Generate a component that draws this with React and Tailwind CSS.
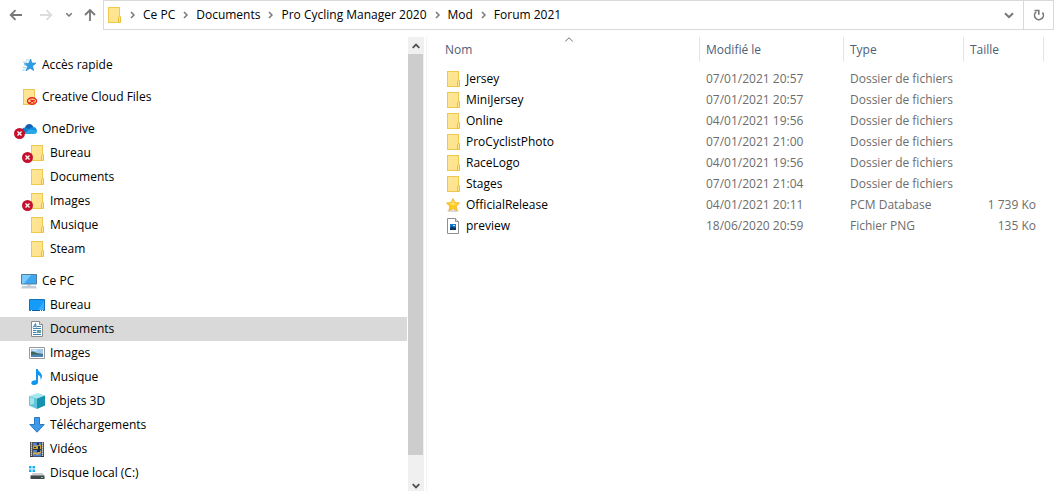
import { useState } from "react";

/* ---------- ICONS ---------- */

function Svg({ children, className = "" }) {
  return (
    <svg viewBox="0 0 16 16" className={`h-4 w-4 shrink-0 ${className}`} fill="none" aria-hidden="true">
      {children}
    </svg>
  );
}

const FolderIcon = () => (
  <Svg>
    <defs>
      <linearGradient id="folder" x1="0" y1="0" x2="1" y2="1">
        <stop offset="0" stopColor="#ffe796" />
        <stop offset="1" stopColor="#ffe28b" />
      </linearGradient>
    </defs>
    <rect x="2.5" y="0.5" width="11" height="15" fill="url(#folder)" stroke="#efc94c" />
    <path d="M12.5 15.5v-5l1-1h1v6z" fill="#ffe591" stroke="#e9c03d" />
  </Svg>
);

const QuickIcon = () => (
  <Svg>
    <path d="M9.7 2l1.100 4 4.200.2-3.500 2.700 1.200 4.600-3.600-2.300-4 2.600 1.500-4.400L3.200 6.800l4.500-.5z" fill="#2b9fe6" stroke="#1c7fc4" strokeWidth=".6" />
    <path d="M5 3h3.500M2 5.200h4M3 8h2.500M2 10.500H5M1 13h3.500" stroke="#8acdf3" strokeWidth=".9" />
  </Svg>
);

const CreativeIcon = () => (
  <Svg>
    <rect x="2.5" y="0.5" width="11" height="15" fill="#ffe591" stroke="#e9c75b" />
    <ellipse cx="11" cy="12" rx="4.500" ry="3.200" stroke="#ee1c1c" strokeWidth="1.400" />
    <path d="M7.500 13.600c1.600.8 2.500-.3 3.200-1.200.8-1 2-1.500 2.800-.4M9 11.200c1-.6 1.700.1 2.300.9.500.7 1.200 1.400 2.200 1" stroke="#ee1c1c" strokeWidth="1.200" />
  </Svg>
);

const CloudIcon = () => (
  <Svg>
    <path d="M4 6.800C4.600 4 7 2.700 9.200 3.200c1.600.3 2.700 1.400 3.200 2.800L8 9z" fill="#0f5fb4" />
    <path d="M0 10.500c0-2.200 1.800-4 4.100-4 1.700 0 3 .9 4.500 2L4 13H3C1.200 13 0 12 0 10.500z" fill="#1180d3" />
    <path d="M8.200 8.700C9.200 6.600 10.600 5.700 12.300 6c2 .2 3.400 1.500 3.700 3.500l-2 2z" fill="#1490df" />
    <path d="M3.300 13l5-4.300 7.500.9c.7 1.800-.6 3.400-2.500 3.400z" fill="#28a8ea" />
  </Svg>
);

const PcIcon = () => (
  <Svg>
    <path d="M.5 1.500h15v9.500H.5z" fill="#3ea7ee" stroke="#4f7f9f" />
    <path d="M1 2h9L3 10.500H1z" fill="#79cbff" />
    <path d="M6 12h4" stroke="#9aaab5" strokeWidth="1" />
    <path d="M1 14h14" stroke="#7d97a8" strokeWidth="1" />
    <path d="M0 15h16" stroke="#c9d3da" strokeWidth="1" />
  </Svg>
);

const DesktopIcon = () => (
  <Svg>
    <path d="M.5 2.500h15v11H.5z" fill="#159bf8" stroke="#1670b8" />
    <path d="M9 13l6-9v9z" fill="#39adff" />
    <path d="M1 13.500h14" stroke="#0b5ca3" />
    <path d="M2 13.500h1M11 13.500h1M13 13.500h1" stroke="#fff" />
  </Svg>
);

const DocumentIcon = () => (
  <Svg>
    <path d="M2.500.5h8l3 3v12h-11z" fill="#fff" stroke="#8c8c8c" />
    <path d="M10.500.5v3h3" fill="#e4e4e4" stroke="#8c8c8c" />
    <path d="M4 6.500l2.500-4 .8 4M5 5.200h2" stroke="#2a7fc0" />
    <path d="M8 5.500h4M4 7.500h8M4 9.500h3.500M4 11.500h3.500M4 13.500h8" stroke="#3f83b5" />
    <path d="M8 9h4v3H8z" fill="#5ca0a0" />
  </Svg>
);

const PictureIcon = () => (
  <Svg>
    <path d="M.5 2.500h15v11H.5z" fill="#fff" stroke="#989898" />
    <path d="M2 4h12v8H2z" fill="#9fc8ec" />
    <path d="M2 7c2-1 3 0 5 .7 2 .700 5 .600 7 1.300v1H2z" fill="#3a6753" />
    <path d="M2 9.800c3-.6 8-.5 12 0V12H2z" fill="#4b83b9" />
    <path d="M3 5.200h5" stroke="#e4f3fc" />
  </Svg>
);

const MusicIcon = () => (
  <Svg>
    <path d="M7 0h1.800c.2 2.500 4.200 3.800 4.200 7.200 0 1.500-.7 2.900-1.500 3.800.6-2.600-.3-4.400-2.500-5v7.200C9 15 7.300 16 5.300 16 3.600 16 2.300 15.200 2.300 13.900c0-1.700 2.200-2.900 4.700-2.600z" fill="#0f96ee" />
  </Svg>
);

const CubeIcon = () => (
  <Svg>
    <path d="M0 3l9-3 7 2.500-8 3z" fill="#a8e7ef" />
    <path d="M0 3l8 2.500V16l-8-3.500z" fill="#5fc6da" />
    <path d="M8 5.500l8-3v10L8 16z" fill="#1791b0" />
    <path d="M1 4.200l4 1.300v5L1 12z" fill="#a3e4ec" />
  </Svg>
);

const DownloadIcon = () => (
  <Svg>
    <path d="M5.500.5h5v7h4.700L8 15.200.8 7.500h4.700z" fill="#3e9aea" stroke="#2b79c4" />
  </Svg>
);

const VideoIcon = () => (
  <Svg>
    <path d="M1 1h14v15H1z" fill="#333" />
    <path d="M2.500 1.500v14M13.500 1.500v14" stroke="#fff" strokeWidth="1.500" strokeDasharray="1.200 .8" />
    <path d="M4 1.500h8V8H4zM4 9h8v6.500H4z" fill="#4f80cf" />
    <path d="M4 6l2-2 2 1 2-2 2 1v4H4z" fill="#c9a53c" />
    <path d="M4 12l2-1 2 1 4-2v2l-3 2-3-1-2 1z" fill="#d0a940" />
    <path d="M8 2h2v2H8zM9 5h2v3H9zM8 9h3v2H8zM5 6h2v1H5z" fill="#1c2c42" />
  </Svg>
);

const DiskIcon = () => (
  <Svg>
    <path d="M0 1h2.500v2.500H0zM3.500 1H6v2.500H3.500zM0 4.500h2.500V7H0zM3.500 4.500H6V7H3.500z" fill="#17b0f5" />
    <path d="M4 8h9.500l2 3h-14z" fill="#c9cbcd" />
    <path d="M1.500 10.500h14V14h-14z" fill="#43474a" />
    <path d="M12 12.500h2" stroke="#62e077" />
  </Svg>
);

const StarIcon = () => (
  <Svg>
    <ellipse cx="8" cy="13.800" rx="6" ry="1.200" fill="#d9d9d9" />
    <path d="M8 1.500l1.900 4 4.600.5-3.300 3.200.9 4.500L8 11.500l-4.100 2.200.9-4.500L1.500 6l4.600-.5z" fill="#ffc91f" stroke="#f2b01e" strokeWidth=".8" />
    <path d="M8 3l1.300 3.200 3 .3L8 8.500 3.700 6.500l3-.3z" fill="#ffe266" />
  </Svg>
);

const PngIcon = () => (
  <Svg>
    <path d="M2.500.5h8l3 3v12h-11z" fill="#fff" stroke="#8f8f8f" />
    <path d="M10.500.5v3h3" fill="#e9e9e9" stroke="#8f8f8f" />
    <path d="M5 6h6v6H5z" fill="#1477cc" />
    <path d="M5 12V10l2-2 2 2 1-1 1 1v2z" fill="#0a3563" />
    <path d="M8 7h2v1H8z" fill="#bfe2fa" />
  </Svg>
);

const ErrorBadge = () => (
  <svg viewBox="0 0 11 11" className="absolute top-[7px] -left-[7px] h-[11px] w-[11px]" aria-hidden="true">
    <circle cx="5.500" cy="5.500" r="5.500" fill="#c4122d" />
    <path d="M3.500 3.500l4 4M7.500 3.500l-4 4" stroke="#fff" strokeWidth="1.300" />
  </svg>
);

const CrumbArrow = () => (
  <svg viewBox="0 0 5 8" className="h-2 w-[5px] shrink-0" fill="none" aria-hidden="true">
    <path d="M1 1l3 3-3 3" stroke="#777" strokeWidth="1.500" />
  </svg>
);

const ScrollArrow = ({ down }) => (
  <svg viewBox="0 0 8 6" className={`h-[6px] w-2 ${down ? "rotate-180" : ""}`} fill="none" aria-hidden="true">
    <path d="M.7 4.800L4 1.500l3.300 3.300" stroke="#505050" strokeWidth="1.800" />
  </svg>
);

/* ---------- DATA ---------- */

const crumbs = ["Ce PC", "Documents", "Pro Cycling Manager 2020", "Mod", "Forum 2021"];

const tree = [
  { name: "Accès rapide", icon: QuickIcon },
  { name: "Creative Cloud Files", icon: CreativeIcon },
  {
    name: "OneDrive",
    icon: CloudIcon,
    error: true,
    children: [
      { name: "Bureau", icon: FolderIcon, error: true },
      { name: "Documents", icon: FolderIcon },
      { name: "Images", icon: FolderIcon, error: true },
      { name: "Musique", icon: FolderIcon },
      { name: "Steam", icon: FolderIcon },
    ],
  },
  {
    name: "Ce PC",
    icon: PcIcon,
    children: [
      { name: "Bureau", icon: DesktopIcon },
      { name: "Documents", icon: DocumentIcon },
      { name: "Images", icon: PictureIcon },
      { name: "Musique", icon: MusicIcon },
      { name: "Objets 3D", icon: CubeIcon },
      { name: "Téléchargements", icon: DownloadIcon },
      { name: "Vidéos", icon: VideoIcon },
      { name: "Disque local (C:)", icon: DiskIcon },
    ],
  },
];

const files = [
  { name: "Jersey", date: "07/01/2021 20:57", type: "Dossier de fichiers", icon: FolderIcon },
  { name: "MiniJersey", date: "07/01/2021 20:57", type: "Dossier de fichiers", icon: FolderIcon },
  { name: "Online", date: "04/01/2021 19:56", type: "Dossier de fichiers", icon: FolderIcon },
  { name: "ProCyclistPhoto", date: "07/01/2021 21:00", type: "Dossier de fichiers", icon: FolderIcon },
  { name: "RaceLogo", date: "04/01/2021 19:56", type: "Dossier de fichiers", icon: FolderIcon },
  { name: "Stages", date: "07/01/2021 21:04", type: "Dossier de fichiers", icon: FolderIcon },
  { name: "OfficialRelease", date: "04/01/2021 20:11", type: "PCM Database", size: "1 739 Ko", icon: StarIcon },
  { name: "preview", date: "18/06/2020 20:59", type: "Fichier PNG", size: "135 Ko", icon: PngIcon },
];

/* ---------- PARTS ---------- */

function TreeItem({ item, child, selected, onSelect }) {
  const Icon = item.icon;
  return (
    <button
      onClick={onSelect}
      className={`flex h-6 w-full items-center gap-[5px] text-left ${child ? "pl-[29px]" : "pl-[21px]"} ${
        selected ? "bg-[#d9d9d9]" : "hover:bg-[#e5f3ff]"
      }`}
    >
      <span className="relative">
        <Icon />
        {item.error && <ErrorBadge />}
      </span>
      <span>{item.name}</span>
    </button>
  );
}

function AddressBar() {
  return (
    <header className="flex h-[30px] shrink-0 items-stretch pr-1">
      <div className="flex w-[103px] shrink-0 items-center text-[#777]">
        <button aria-label="Précédent" className="ml-2 flex w-4 justify-center">
          <Svg>
            <path d="M14 8H3M7.500 3.200L2.700 8l4.800 4.800" stroke="currentColor" strokeWidth="1.800" />
          </Svg>
        </button>
        <button aria-label="Suivant" disabled className="ml-[14px] flex w-4 justify-center text-[#dcdcdc]">
          <Svg>
            <path d="M2 8h11M8.500 3.200L13.300 8l-4.800 4.800" stroke="currentColor" strokeWidth="1.800" />
          </Svg>
        </button>
        <button aria-label="Emplacements récents" className="ml-[7px] flex w-4 justify-center">
          <svg viewBox="0 0 8 6" className="h-[6px] w-2" fill="none">
            <path d="M1.200 1.200L4 4l2.800-2.800" stroke="currentColor" strokeWidth="1.500" />
          </svg>
        </button>
        <button aria-label="Dossier parent" className="ml-[5px] flex w-4 justify-center">
          <Svg>
            <path d="M8 14V3M3 8l5-5 5 5" stroke="currentColor" strokeWidth="1.800" />
          </Svg>
        </button>
      </div>

      <div className="flex min-w-0 flex-1 border border-[#d9d9d9]">
        <nav className="flex min-w-0 flex-1 items-center pl-[2px]">
          <FolderIcon />
          {crumbs.map((c) => (
            <span key={c} className="flex items-center whitespace-nowrap">
              <span className="flex w-[21px] justify-center">
                <CrumbArrow />
              </span>
              <button>{c}</button>
            </span>
          ))}
        </nav>
        <button aria-label="Historique" className="flex w-7 items-center justify-center text-[#777]">
          <svg viewBox="0 0 10 7" className="h-[7px] w-[10px]" fill="none">
            <path d="M1 1.200l4 4 4-4" stroke="currentColor" strokeWidth="2" />
          </svg>
        </button>
        <button
          aria-label="Actualiser"
          className="flex w-[30px] items-center justify-center border-l border-[#d9d9d9] text-[#777]"
        >
          <Svg>
            <path d="M5.200 4.800a4.400 4.400 0 1 0 6.300.8" stroke="currentColor" strokeWidth="1.600" />
            <path d="M3.500 3.500h4.300v4.300" stroke="currentColor" strokeWidth="1.600" />
          </Svg>
        </button>
      </div>
    </header>
  );
}

export default function App() {
  const [selected, setSelected] = useState("Ce PC/Documents");

  return (
    <div className="flex h-screen flex-col overflow-hidden bg-white font-['Segoe_UI','Open_Sans',sans-serif] text-[12px] leading-4 text-black">
      <AddressBar />

      <div className="flex min-h-0 flex-1 pt-[7px]">
        {/* TREE */}
        <aside className="flex w-[427px] shrink-0 border-r border-[#f3f3f3] pr-[2px]">
          <nav className="flex min-w-0 flex-1 flex-col gap-2 overflow-hidden pt-4">
            {tree.map((group) => (
              <div key={group.name}>
                <TreeItem
                  item={group}
                  selected={selected === group.name}
                  onSelect={() => setSelected(group.name)}
                />
                {group.children?.map((c) => {
                  const id = `${group.name}/${c.name}`;
                  return (
                    <TreeItem key={id} item={c} child selected={selected === id} onSelect={() => setSelected(id)} />
                  );
                })}
              </div>
            ))}
          </nav>

          {/* SCROLLBAR */}
          <div className="ml-px flex w-4 flex-col bg-[#f0f0f0]">
            <button aria-label="Défiler vers le haut" className="flex h-[17px] items-center justify-center">
              <ScrollArrow />
            </button>
            <div className="mr-px flex-1 bg-[#cdcdcd]"></div>
            <button aria-label="Défiler vers le bas" className="flex h-9 items-end justify-center pb-[2px]">
              <ScrollArrow down />
            </button>
          </div>
        </aside>

        {/* FILES */}
        <main className="min-w-0 flex-1 overflow-hidden pl-3">
          <table className="table-fixed border-separate border-spacing-0 whitespace-nowrap">
            <colgroup>
              <col className="w-[261px]" />
              <col className="w-[144px]" />
              <col className="w-[120px]" />
              <col className="w-[80px]" />
            </colgroup>
            <thead>
              <tr className="h-[25px] text-left text-[#4c607a]">
                <th className="relative border-r border-[#e5e5e5] px-[6px] font-normal">
                  Nom
                  <svg
                    viewBox="0 0 9 5"
                    className="absolute top-0 left-1/2 h-[5px] w-[9px] -translate-x-1/2"
                    fill="none"
                    aria-hidden="true"
                  >
                    <path d="M.7 4.500l3.800-3.800 3.800 3.800" stroke="#6d6d6d" />
                  </svg>
                </th>
                <th className="border-r border-[#e5e5e5] px-[6px] font-normal">Modifié le</th>
                <th className="border-r border-[#e5e5e5] px-[6px] font-normal">Type</th>
                <th className="border-r border-[#e5e5e5] px-[6px] font-normal">Taille</th>
              </tr>
            </thead>
            <tbody className="text-[#6d6d6d] before:block before:h-[6px]">
              {files.map((f) => (
                <tr key={f.name} className="h-[21px] hover:bg-[#e5f3ff]">
                  <td className="px-[6px] text-black">
                    <div className="flex items-center gap-[5px]">
                      <f.icon />
                      <span>{f.name}</span>
                    </div>
                  </td>
                  <td className="px-[6px]">{f.date}</td>
                  <td className="px-[6px]">{f.type}</td>
                  <td className="pr-2 pl-[6px] text-right">{f.size}</td>
                </tr>
              ))}
            </tbody>
          </table>
        </main>
      </div>
    </div>
  );
}
